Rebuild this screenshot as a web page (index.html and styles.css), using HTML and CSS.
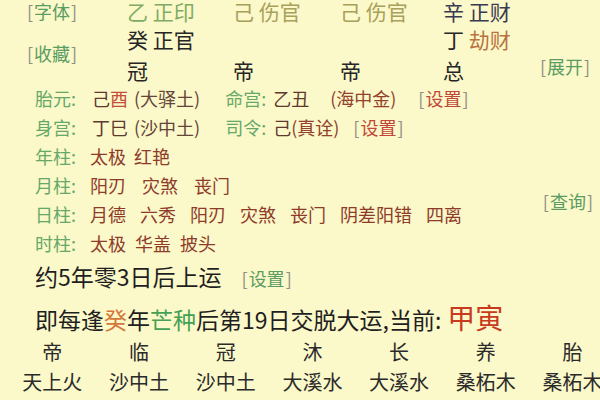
FILE: index.html
```html
<!DOCTYPE html>
<html lang="zh-CN">
<head>
<meta charset="utf-8">
<title>排盘</title>
<link rel="stylesheet" href="styles.css">
</head>
<body>
<div class="page">
  <div class="top">
    <div class="cell lnk font">[<span class="lt">字体</span>]</div>
    <div class="cell c-green">乙 正印</div>
    <div class="cell c-olive">己 伤官</div>
    <div class="cell c-olive">己 伤官</div>
    <div class="cell"><span class="c-navy">辛 正财</span></div>
    <div class="cell lnk fav">[<span class="lt">收藏</span>]</div>
    <div class="cell c-black r2">癸 正官</div>
    <div class="cell r2 col5"><span class="c-black">丁</span>&nbsp;<span class="c-orange">劫财</span></div>
    <div class="cell c-black r3 col2">冠</div>
    <div class="cell c-black r3">帝</div>
    <div class="cell c-black r3">帝</div>
    <div class="cell c-black r3">总</div>
    <div class="cell lnk r3 open">[<span class="lt">展开</span>]</div>
  </div>

  <div class="info">
    <div class="rows">
      <div class="row">
        <span class="lbl">胎元:</span>
        <span class="dk">己</span><span class="rd">酉</span>
        <span class="br ml6">(大驿土)</span>
        <span class="lbl lbl2 ml25">命宫:</span>
        <span class="dk">乙丑</span>
        <span class="br2 ml21">(海中金)</span>
        <span class="lnk ml22">[<span class="lr">设置</span>]</span>
      </div>
      <div class="row">
        <span class="lbl">身宫:</span>
        <span class="dk">丁巳</span>
        <span class="br ml6">(沙中土)</span>
        <span class="lbl lbl2 ml25">司令:</span>
        <span class="dk">己</span><span class="br2">(真诠)</span>
        <span class="lnk ml14">[<span class="lr">设置</span>]</span>
      </div>
      <div class="row words w8">
        <span class="lbl">年柱:</span>
        <span>太极</span><span>红艳</span>
      </div>
      <div class="row words w16">
        <span class="lbl">月柱:</span>
        <span>阳刃</span><span>灾煞</span><span>丧门</span>
      </div>
      <div class="row words w14">
        <span class="lbl">日柱:</span>
        <span>月德</span><span>六秀</span><span>阳刃</span><span>灾煞</span><span>丧门</span><span>阴差阳错</span><span>四离</span>
      </div>
      <div class="row words w9">
        <span class="lbl">时柱:</span>
        <span>太极</span><span>华盖</span><span>披头</span>
      </div>
    </div>
    <div class="side">
      <span class="lnk">[<span class="lt">查询</span>]</span>
    </div>
  </div>

  <div class="big">约5年零3日后上运<span class="lnk small ml20">[<span class="lt">设置</span>]</span></div>
  <div class="big line2">即每逢<span class="c-gui">癸</span>年<span class="c-mz">芒种</span>后第19日交脱大运,当前:<span class="jy">甲寅</span></div>

  <div class="grid7 stages">
    <span>帝</span><span>临</span><span>冠</span><span>沐</span><span>长</span><span>养</span><span>胎</span>
  </div>
  <div class="grid7 nayin">
    <span>天上火</span><span>沙中土</span><span>沙中土</span><span>大溪水</span><span>大溪水</span><span>桑柘木</span><span>桑柘木</span>
  </div>
</div>
</body>
</html>
```

FILE: styles.css
```css
html, body {
  margin: 0;
  padding: 0;
}
body {
  width: 600px;
  height: 400px;
  overflow: hidden;
  background: #fbf8c9;
  font-family: "Noto Sans CJK SC", "Noto Sans", sans-serif;
  color: #2b2b2b;
}
.page {
  width: 600px;
}

/* top pillars */
.top {
  display: grid;
  grid-template-columns: 100px 106px 107px 103px 97px 1fr;
  grid-template-rows: 28px 29px 32px;
  padding-left: 27px;
  margin-top: -3px;
  font-size: 21px;
}
.cell {
  display: flex;
  align-items: center;
  white-space: nowrap;
  line-height: 1;
}
.r2 { grid-row: 2; }
.r3 { grid-row: 3; }
.col2 { grid-column: 2; }
.col5 { grid-column: 5; }
.fav {
  grid-row: 2 / span 2;
  grid-column: 1;
  padding-bottom: 6px;
}
.open {
  grid-column: 6;
  padding-bottom: 8px;
}
.c-green { color: #7fab62; }
.c-olive { color: #a9a05c; }
.c-navy { color: #3a3a52; }
.c-black { color: #262626; }
.c-orange { color: #b9733f; }

/* links */
.lnk {
  font-size: 18px;
  color: #8f8f84;
  white-space: nowrap;
}
.lnk .lt { color: #5a9c62; margin: 0 1px; }
.lnk .lr { color: #c0473a; margin: 0 1px; }

/* info rows */
.info {
  display: flex;
  margin-top: -2px;
}
.rows {
  padding-left: 35px;
  font-size: 18px;
  line-height: 29px;
}
.row {
  display: flex;
  align-items: baseline;
  white-space: nowrap;
}
.lbl {
  display: inline-block;
  width: 57px;
  color: #66a868;
}
.lbl2 { width: 48px; }
.dk { color: #5e3a2e; }
.rd { color: #c54e3a; }
.br { color: #65443a; }
.br2 { color: #93402e; }
.ml6 { margin-left: 6px; }
.ml14 { margin-left: 14px; }
.ml20 { margin-left: 20px; }
.ml21 { margin-left: 21px; }
.ml22 { margin-left: 22px; }
.ml25 { margin-left: 25px; }

.words { color: #8e3b2a; }
.w8 { column-gap: 8px; }
.w9 { column-gap: 9px; }
.w14 { column-gap: 14px; }
.w16 { column-gap: 16px; }
.w8 .lbl { margin-right: -10px; }
.w9 .lbl { margin-right: -11px; }
.w14 .lbl { margin-right: -16px; }
.w16 .lbl { margin-right: -18px; }

.side {
  margin-left: auto;
  margin-right: 7px;
  padding-top: 107px;
  line-height: 20px;
}

/* luck lines */
.big {
  padding-left: 35px;
  font-size: 23px;
  line-height: 36px;
  color: #1f1f1f;
  white-space: nowrap;
}
.big .small { font-size: 18px; }
.line2 { margin-top: 5px; }
.c-gui { color: #d4773a; }
.c-mz { color: #44a155; }
.jy {
  color: #c8391f;
  font-size: 28px;
  line-height: 1;
  margin-left: 6px;
}

/* bottom grid */
.grid7 {
  display: grid;
  grid-template-columns: repeat(7, 86.7px);
  padding-left: 9px;
  font-size: 20px;
  text-align: center;
  color: #2a2a2a;
  white-space: nowrap;
}
.stages { line-height: 29px; }
.nayin { line-height: 31px; }
```
